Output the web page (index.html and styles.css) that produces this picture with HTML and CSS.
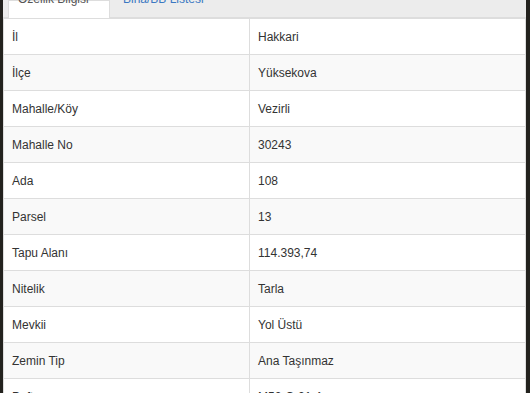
FILE: index.html
```html
<!DOCTYPE html>
<html lang="tr">
<head>
<meta charset="utf-8">
<title>Parsel Bilgileri</title>
<link rel="stylesheet" href="styles.css">
</head>
<body>
<div class="panel">
  <div class="tabs">
    <div class="tab active"><span>Özellik Bilgisi</span></div>
    <div class="tab"><span>Bina/BB Listesi</span></div>
  </div>
  <table class="info">
    <colgroup><col class="c1"><col></colgroup>
    <tbody>
      <tr><td>İl</td><td>Hakkari</td></tr>
      <tr><td>İlçe</td><td>Yüksekova</td></tr>
      <tr><td>Mahalle/Köy</td><td>Vezirli</td></tr>
      <tr><td>Mahalle No</td><td>30243</td></tr>
      <tr><td>Ada</td><td>108</td></tr>
      <tr><td>Parsel</td><td>13</td></tr>
      <tr><td>Tapu Alanı</td><td>114.393,74</td></tr>
      <tr><td>Nitelik</td><td>Tarla</td></tr>
      <tr><td>Mevkii</td><td>Yol Üstü</td></tr>
      <tr><td>Zemin Tip</td><td>Ana Taşınmaz</td></tr>
      <tr><td>Pafta</td><td>M52-C-21-A</td></tr>
    </tbody>
  </table>
</div>
</body>
</html>
```
FILE: styles.css
```css
html, body {
  margin: 0;
  padding: 0;
}
body {
  background: #23221e;
  font-family: "Liberation Sans", Arial, sans-serif;
  font-size: 12px;
  color: #333;
  overflow: hidden;
  height: 393px;
}
.panel {
  margin: 0 4px 0 3px;
  background: #eee;
}
.tabs {
  display: flex;
  height: 17px;
  padding-left: 5px;
  border-bottom: 1px solid #ddd;
  background: #ececec;
}
.tab {
  display: flex;
  align-items: flex-end;
  height: 17px;
  padding: 0 12px 11px 12px;
  box-sizing: border-box;
  line-height: 14px;
  color: #3a78c2;
  border: 1px solid transparent;
  border-bottom: 0;
}
.tab.active {
  background: #fff;
  color: #555;
  border-color: #ddd;
  height: 18px;
  padding: 0 9px 12px 9px;
  width: 102px;
  margin-bottom: -1px;
}
.info {
  width: 100%;
  table-layout: fixed;
  border-collapse: collapse;
  background: #fff;
}
.info col.c1 {
  width: 246px;
}
.info td {
  height: 36px;
  box-sizing: border-box;
  padding: 0 8px;
  line-height: 14px;
  border: 1px solid #ddd;
  vertical-align: middle;
}
.info tr:nth-child(even) td {
  background: #f9f9f9;
}
```
